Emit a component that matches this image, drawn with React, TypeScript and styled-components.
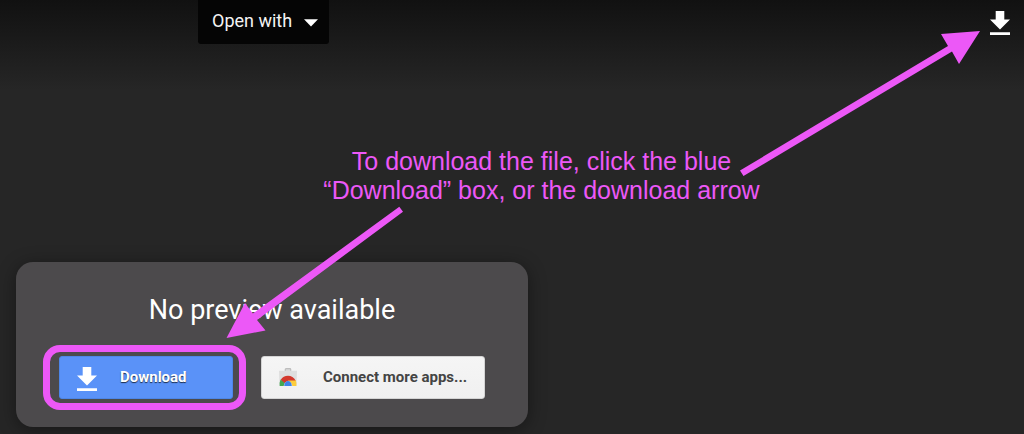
import React from "react";
import styled, { createGlobalStyle } from "styled-components";

const PINK = "#ec58f7";

const GlobalStyle = createGlobalStyle`
  *, *::before, *::after { box-sizing: border-box; }
  body {
    margin: 0;
    background: #262626;
    color: #fff;
    font-family: Roboto, "Liberation Sans", sans-serif;
  }
`;

const Viewer = styled.div`
  position: relative;
  min-height: 100vh;
  overflow: hidden;
  background: linear-gradient(#111 0, #262626 90px);
`;

const TopBar = styled.header`
  display: flex;
  justify-content: space-between;
  align-items: flex-start;
  padding: 0 14px 0 198px;
`;

const OpenWith = styled.button`
  display: flex;
  align-items: center;
  gap: 12px;
  height: 44px;
  padding: 0 11px 2px 14px;
  border: 0;
  border-radius: 0 0 3px 3px;
  background: #050505;
  color: #f4f4f4;
  font: 400 18px/24px Roboto, sans-serif;
  white-space: nowrap;

  svg {
    margin-top: 4px;
  }
`;

const IconButton = styled.button`
  display: flex;
  padding: 0;
  margin-top: 11px;
  border: 0;
  background: none;
  color: #fff;
`;

const Caption = styled.p`
  margin: 103px 0 0 59px;
  color: ${PINK};
  font: 400 25px/29px "Liberation Sans", Arial, sans-serif;
  text-align: center;
`;

const Panel = styled.section`
  width: 50%;
  min-width: 512px;
  margin: 57px 0 0 16px;
  padding: 30px 43px 17px 27px;
  border-radius: 17px;
  background: #4c4a4c;
  box-shadow: 0 3px 18px rgba(0, 0, 0, 0.4);
`;

const Title = styled.h1`
  margin: 0 0 17px 16px;
  font: 400 27px/36px Roboto, sans-serif;
  text-align: center;
`;

const Actions = styled.div`
  display: flex;
  align-items: center;
  gap: 15px;
`;

const Highlight = styled.div`
  flex: 0 0 auto;
  padding: 4px 6px 4px 9px;
  border: 7px solid ${PINK};
  border-radius: 17px;
`;

const ActionButton = styled.button<{ $primary?: boolean }>`
  display: flex;
  align-items: center;
  flex: ${(p) => (p.$primary ? "0 0 auto" : "1 1 auto")};
  gap: ${(p) => (p.$primary ? "23px" : "26px")};
  width: ${(p) => (p.$primary ? "174px" : "auto")};
  height: 43px;
  padding: 0 0 2px 17px;
  border: 1px solid ${(p) => (p.$primary ? "#4d86e8" : "#d4d4d4")};
  border-radius: 3px;
  background: ${(p) => (p.$primary ? "#5a92f8" : "linear-gradient(#f5f5f5, #f0f0f0)")};
  color: ${(p) => (p.$primary ? "#fff" : "#444")};
  font: 700 15px/20px Roboto, sans-serif;
  text-shadow: ${(p) => (p.$primary ? "0 1px 1px rgba(0, 0, 0, 0.7)" : "none")};
  white-space: nowrap;
`;

const ActionIcon = styled.span`
  display: flex;
  padding-top: 4px;
`;

const Pointer = styled.svg<{ $side: "left" | "right" }>`
  position: absolute;
  pointer-events: none;
  fill: ${PINK};
  ${(p) => (p.$side === "left" ? "left: 226px; top: 206px;" : "right: 41px; top: 30px;")}
`;

const DownloadIcon = () => (
  <svg width="20" height="24" viewBox="0 0 20 24" fill="currentColor" aria-hidden="true">
    <path d="M5.700 0h8.600v8.500H20L10 18.500 0 8.500h5.700zM0 21.300h20V24H0z" />
  </svg>
);

const StoreIcon = () => (
  <svg width="18" height="18" viewBox="0 0 18 18" aria-hidden="true">
    <path d="M6.300 3V1.500Q6.300 .7 7.100 .7h3.800q.8 0 .8.800V3" fill="#d8d8d8" stroke="#bdbdbd" strokeWidth="1.200" />
    <path d="M0 2.700h18L17.500 18H.5z" fill="#dedede" />
    <path d="M1.500 11.500Q.3 14.500 .7 18H7L5.500 14z" fill="#43a852" />
    <path d="M9 12h7.700q1 2.500.700 6H11z" fill="#fccd3d" />
    <path d="M1.800 11.800C3.300 9.300 5.900 7.800 9 7.800s6.100 1.700 7.600 4.700H9.500L5.500 15z" fill="#d3382c" />
    <path d="M4.700 18a4.400 5.700 0 0 1 8.600 0z" fill="#f1f1f1" />
    <path d="M5.200 18C5.200 11.300 12.800 11.300 12.800 18z" fill="#3f83e8" />
  </svg>
);

export default function App() {
  return (
    <Viewer>
      <GlobalStyle />
      <TopBar>
        <OpenWith type="button">
          Open with
          <svg width="14" height="8" viewBox="0 0 14 8" fill="#fff" aria-hidden="true">
            <path d="M0 .3h14L7 7.500z" />
          </svg>
        </OpenWith>
        <IconButton type="button" aria-label="Download">
          <DownloadIcon />
        </IconButton>
      </TopBar>
      <Caption>
        To download the file, click the blue
        <br />
        “Download” box, or the download arrow
      </Caption>
      <Panel>
        <Title>No preview available</Title>
        <Actions>
          <Highlight>
            <ActionButton type="button" $primary>
              <ActionIcon>
                <DownloadIcon />
              </ActionIcon>
              Download
            </ActionButton>
          </Highlight>
          <ActionButton type="button">
            <StoreIcon />
            Connect more apps...
          </ActionButton>
        </Actions>
      </Panel>
      <Pointer $side="left" width="178" height="133" viewBox="0 0 178 133" aria-hidden="true">
        <path d="M.500 132L19 97l7.800 10.500L173.300 .700l3.700 5L31 114l8.500 10.500z" />
      </Pointer>
      <Pointer $side="right" width="243" height="147" viewBox="0 0 243 147" aria-hidden="true">
        <path d="M240 1L201 4l7 12L0 140.500l3.500 5.500L212 21.500l7 12.500z" />
      </Pointer>
    </Viewer>
  );
}
